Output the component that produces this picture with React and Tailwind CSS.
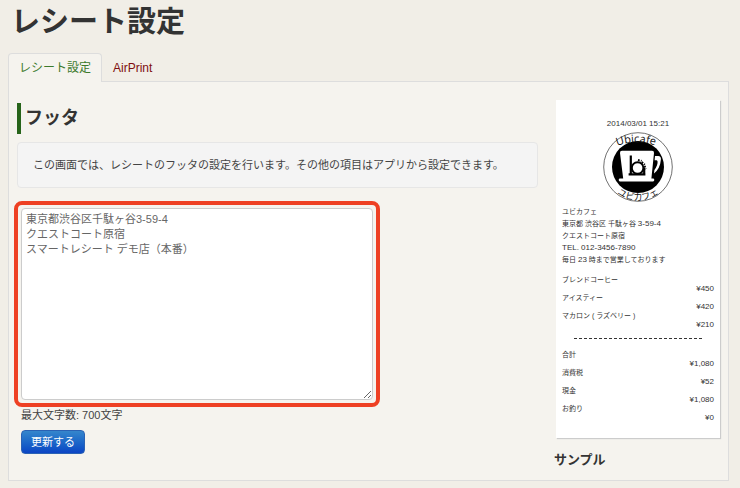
import { useState } from 'react';

const tabs = [
  { id: 'receipt', label: 'レシート設定' },
  { id: 'airprint', label: 'AirPrint' },
];

const items = [
  { name: 'ブレンドコーヒー', price: '¥450' },
  { name: 'アイスティー', price: '¥420' },
  { name: 'マカロン ( ラズベリー )', price: '¥210' },
];

const totals = [
  { name: '合計', price: '¥1,080' },
  { name: '消費税', price: '¥52' },
  { name: '現金', price: '¥1,080' },
  { name: 'お釣り', price: '¥0' },
];

function Logo() {
  return (
    <svg viewBox="0 0 70 70" className="mx-auto block h-[70px] w-[70px] overflow-visible" role="img" aria-label="Ubicafe">
      <defs>
        <path id="arc-top" d="M10 15.5Q33 5.5 58 15.5" />
        <path id="arc-bottom" d="M1.5 35a33.5 33.5 0 0 0 67 0" />
      </defs>
      <circle cx="35" cy="35" r="34.3" fill="#fff" stroke="#333" strokeWidth="0.7" />
      <circle cx="35" cy="35" r="26" fill="#000" />
      {/* cup */}
      <path d="M19 18.8h30q2.2 0 2 2.2l-2.6 25.6h1.6q1.3 0 1.3 1.4t-1.3 1.4H17q-1.3 0-1.3-1.4t1.3-1.4h3.2L17 21q-.2-2.2 2-2.2z" fill="#fff" />
      <path d="M52 24h3.2q3 0 2.7 3.6-.7 9-6.9 14l.4-3.6q3.4-4.6 3.2-8.2-.1-1.6-1-1.6h-2z" fill="#fff" />
      {/* camera mark */}
      <path d="M27.8 23.5v18.8M25.6 42.3h16.8M41.2 42.3V36" fill="none" stroke="#000" strokeWidth="2.2" />
      <circle cx="34.6" cy="36" r="5.8" fill="#fff" stroke="#000" strokeWidth="2" />
      <path d="M35 28l3.6.9M38.8 30l3 2.7M41.5 34l1.5 3" stroke="#000" strokeWidth="2" strokeDasharray="1.7 1.2" />
      <text fontSize="11" fill="#111" textAnchor="middle" className="font-['Open_Sans','Noto_Sans',sans-serif] font-medium">
        <textPath href="#arc-top" startOffset="48%">Ubicafe</textPath>
      </text>
      <text fontSize="9" fill="#111" textAnchor="middle">
        <textPath href="#arc-bottom" startOffset="50%">ユビカフェ</textPath>
      </text>
    </svg>
  );
}

function Rows({ rows }) {
  return (
    <dl>
      {rows.map((row) => (
        <div key={row.name}>
          <dt className="leading-[9px]">{row.name}</dt>
          <dd className="text-right text-[8px] leading-[9px]">{row.price}</dd>
        </div>
      ))}
    </dl>
  );
}

function Receipt() {
  return (
    <div className="bg-white px-1.5 pt-[18px] pb-4 text-[7px] text-[#333] shadow-[1px_1px_1px_#ccc]">
      <p className="text-center text-[8px] leading-[12px]">2014/03/01 15:21</p>
      <div className="mt-0.5">
        <Logo />
      </div>
      <div className="mt-1 mb-[9px] leading-[12px]">
        <p>ユビカフェ</p>
        <p>東京都 渋谷区 千駄ヶ谷 <span className="text-[8px]">3-59-4</span></p>
        <p>クエストコート原宿</p>
        <p className="text-[8px]">TEL. 012-3456-7890</p>
        <p>毎日 <span className="text-[8px]">23</span> 時まで営業しております</p>
      </div>
      <Rows rows={items} />
      <hr className="mx-3 mt-[9px] mb-[11px] border-t border-dashed border-[#333]" />
      <Rows rows={totals} />
    </div>
  );
}

export default function App() {
  const [active, setActive] = useState('receipt');
  const [footer, setFooter] = useState(
    '東京都渋谷区千駄ヶ谷3-59-4\nクエストコート原宿\nスマートレシート デモ店（本番）'
  );

  return (
    <div className="min-h-screen bg-[#f1eee7] pr-[11px] pb-2 pl-2 font-['Liberation_Sans','Noto_Sans_CJK_JP',sans-serif] text-[11px] text-[#444]">
      <h1 className="mb-2 pl-[3px] text-[29px] leading-[45px] font-bold text-[#333]">レシート設定</h1>

      <nav className="relative z-10 -mb-px flex">
        {tabs.map((tab) => (
          <a
            key={tab.id}
            href={`#${tab.id}`}
            onClick={() => setActive(tab.id)}
            className={
              active === tab.id
                ? 'rounded-t border border-b-0 border-[#ddd] bg-[#f5f3ee] px-2.5 text-[12px] leading-[28px] text-[#3c7a2c]'
                : 'border border-b-0 border-transparent px-2.5 text-[12px] leading-[28px] text-[#800f0f]'
            }
          >
            {tab.label}
          </a>
        ))}
      </nav>

      <div className="flex gap-[18px] border border-[#ddd] bg-[#f5f3ee] pr-2 pb-2.5 pl-2">
        <main className="min-w-0 flex-1 pt-[21px]">
          <h2 className="border-l-4 border-[#27641a] pl-1 text-[18px] leading-[31px] font-bold text-[#333]">フッタ</h2>

          <p className="mt-2 rounded-sm border border-[#e6e6e6] bg-[#f4f4f4] px-[15px] py-3.5 leading-4">
            この画面では、レシートのフッタの設定を行います。その他の項目はアプリから設定できます。
          </p>

          <form onSubmit={(e) => e.preventDefault()} className="mt-[13px] -ml-[3px]">
            <div className="w-[366px] max-w-full rounded-lg border-4 border-[#ee4023] p-[3px]">
              <textarea
                aria-label="フッタ"
                value={footer}
                onChange={(e) => setFooter(e.target.value)}
                className="block h-[192px] w-full rounded-sm border border-[#ccc] bg-white px-1 py-[3px] leading-[15px] text-[#666] focus:outline-none"
              />
            </div>
            <p className="pl-[7px] leading-4">最大文字数: 700文字</p>
            <button
              type="submit"
              className="mt-[7px] ml-[7px] block rounded-sm border border-[#2a62b4] bg-linear-to-b from-[#3586cc] to-[#0d44c4] px-[9px] leading-[22px] text-white"
            >
              更新する
            </button>
          </form>
        </main>

        <aside className="w-[164px] shrink-0 pt-[18px]">
          <Receipt />
          <h3 className="mt-3 -ml-0.5 text-[13px] leading-5 font-bold text-[#333]">サンプル</h3>
        </aside>
      </div>
    </div>
  );
}
